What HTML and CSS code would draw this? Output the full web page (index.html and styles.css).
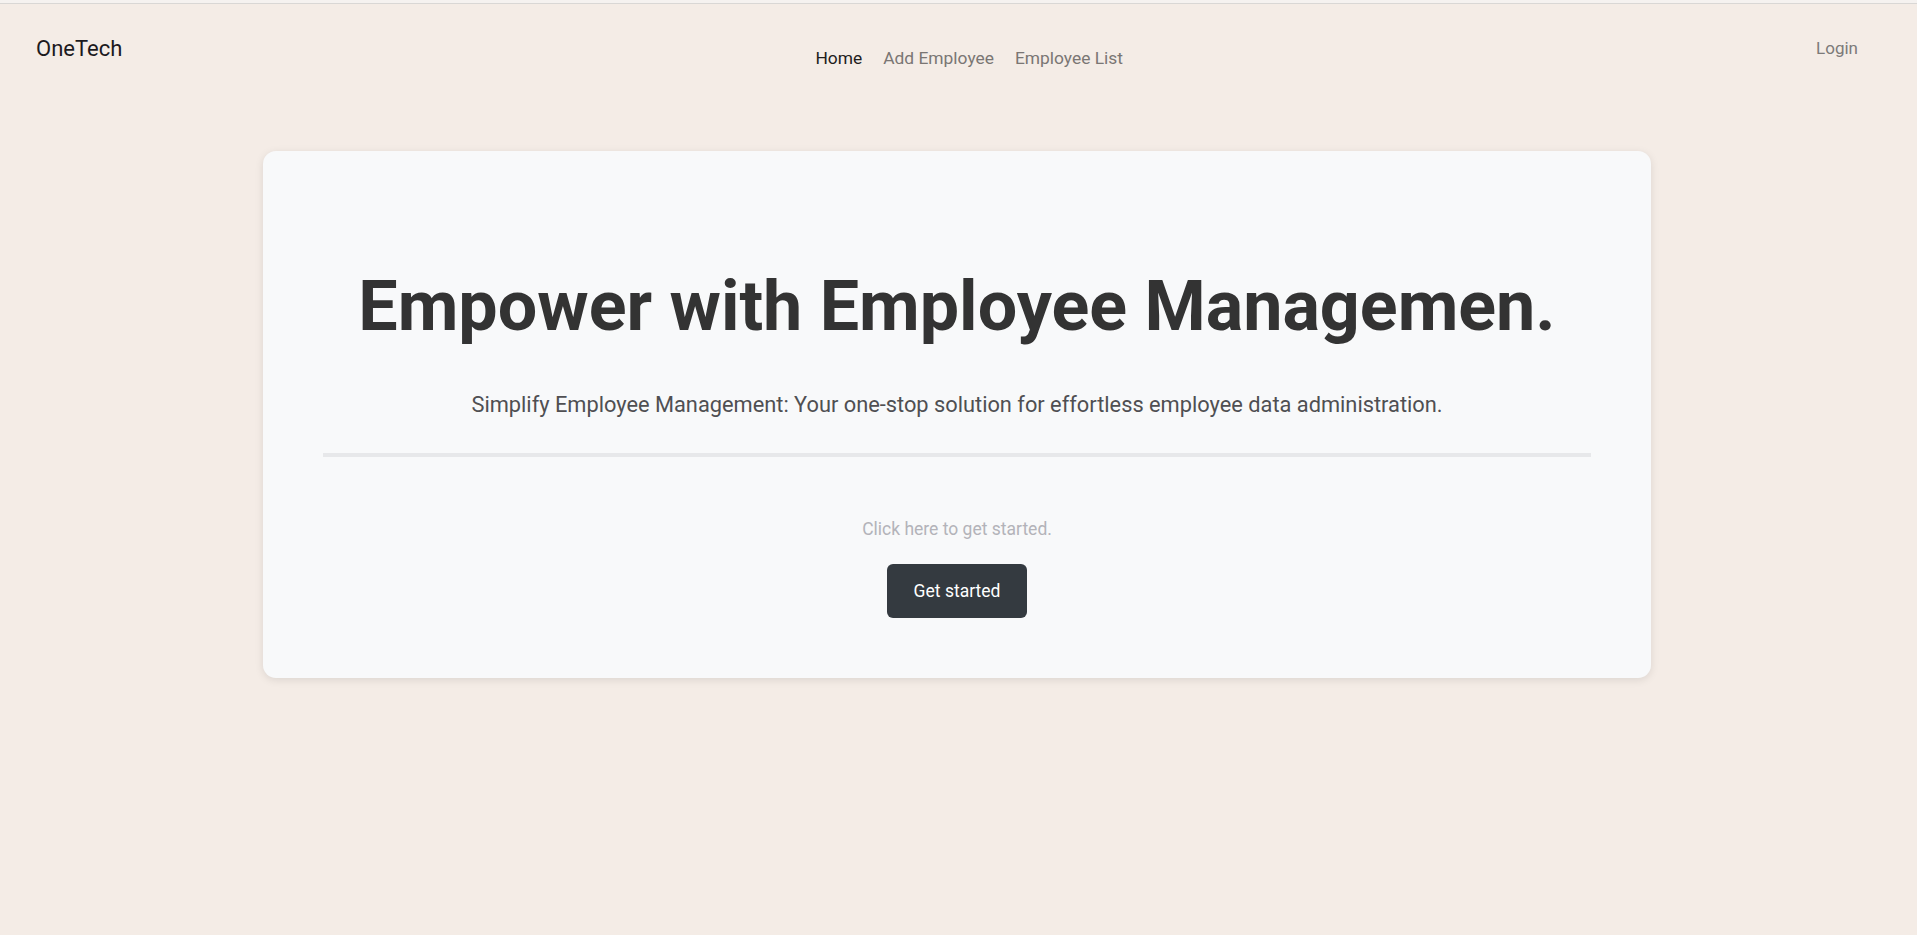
FILE: index.html
```html
<!DOCTYPE html>
<html lang="en">
<head>
<meta charset="utf-8">
<title>OneTech</title>
<link rel="stylesheet" href="styles.css">
</head>
<body>
<div class="topline"></div>
<header class="header">
  <a class="brand" href="#">OneTech</a>
  <nav class="nav">
    <a class="nav-link active" href="#">Home</a>
    <a class="nav-link" href="#">Add Employee</a>
    <a class="nav-link" href="#">Employee List</a>
  </nav>
  <a class="login" href="#">Login</a>
</header>
<main class="card">
  <h1 class="title">Empower with Employee Managemen.</h1>
  <p class="lead">Simplify Employee Management: Your one-stop solution for effortless employee data administration.</p>
  <hr class="divider">
  <p class="hint">Click here to get started.</p>
  <button class="btn">Get started</button>
</main>
</body>
</html>
```

FILE: styles.css
```css
* { box-sizing: border-box; }
html, body { margin: 0; padding: 0; }
body {
  background: #f4ece6;
  font-family: Roboto, "Liberation Sans", Arial, sans-serif;
  min-height: 935px;
}
a { text-decoration: none; }
.topline {
  height: 4px;
  background: #f5f2f0;
  border-bottom: 1px solid #d9d7d5;
}
.header {
  height: 96px;
  display: flex;
  justify-content: space-between;
  align-items: flex-start;
  padding: 0 59px 0 36px;
}
.brand {
  margin-top: 30px;
  font-size: 22px;
  line-height: 30px;
  color: #1c1a1e;
}
.nav {
  margin-top: 41.5px;
  display: flex;
  gap: 21px;
}
.nav-link {
  font-size: 17.4px;
  line-height: 24px;
  color: #7a7674;
}
.nav-link.active { color: #1f1d1d; }
.login {
  margin-top: 31.5px;
  font-size: 17px;
  line-height: 24px;
  color: #7c7a79;
}
.card {
  width: 1388px;
  margin: 51px 0 0 263px;
  background: #f8f9fa;
  border-radius: 13px;
  box-shadow: 0 2px 8px rgba(0, 0, 0, 0.1);
  padding: 113px 60px 60px;
  display: flex;
  flex-direction: column;
  align-items: center;
}
.title {
  margin: 0 0 41.5px;
  font-size: 70px;
  line-height: 84px;
  font-weight: 700;
  color: #333333;
  text-align: center;
}
.lead {
  margin: 0 0 33.5px;
  font-size: 21.8px;
  line-height: 30px;
  color: #4f4f52;
  text-align: center;
}
.divider {
  width: 100%;
  margin: 0 0 60px;
  border: 0;
  height: 4px;
  background: #e7e8ea;
}
.hint {
  margin: 0 0 23px;
  font-size: 17.5px;
  line-height: 24px;
  color: #b3b3b9;
}
.btn {
  height: 54px;
  padding: 0 27px;
  border: 0;
  border-radius: 6px;
  background: #343a40;
  color: #ffffff;
  font-family: inherit;
  font-size: 17.5px;
  line-height: 27px;
}
```
